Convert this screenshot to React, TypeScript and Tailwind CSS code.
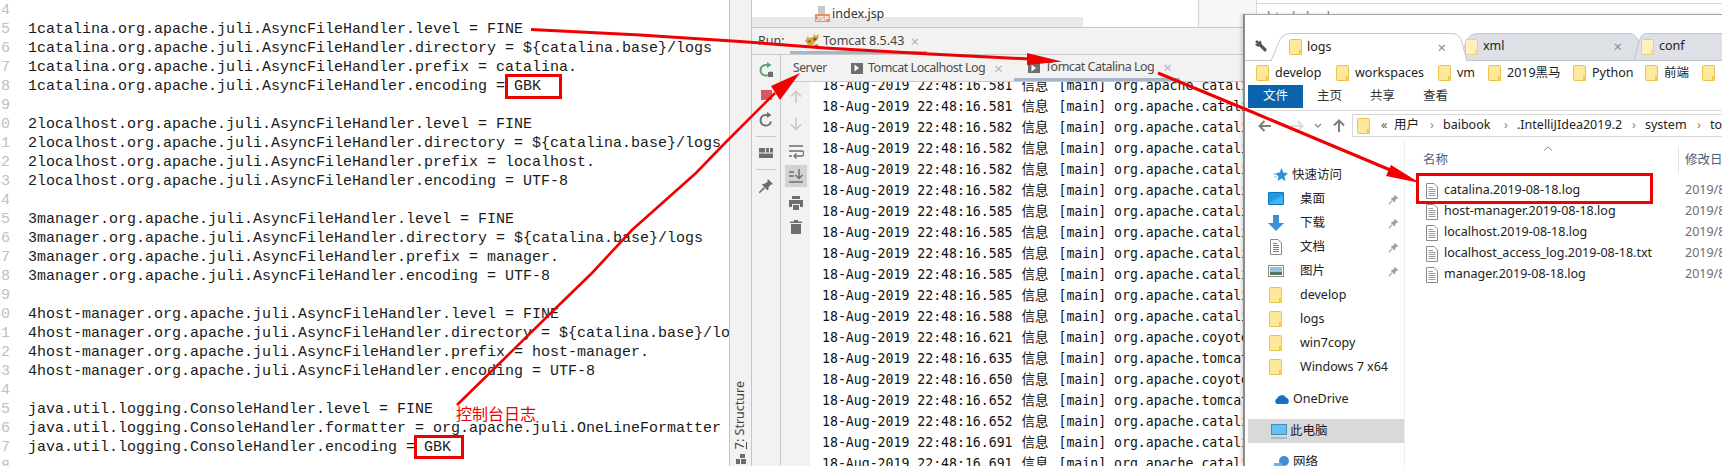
import React from "react";

const editorLines: (string | null)[] = [
  null,
  "1catalina.org.apache.juli.AsyncFileHandler.level = FINE",
  "1catalina.org.apache.juli.AsyncFileHandler.directory = ${catalina.base}/logs",
  "1catalina.org.apache.juli.AsyncFileHandler.prefix = catalina.",
  "1catalina.org.apache.juli.AsyncFileHandler.encoding = GBK",
  null,
  "2localhost.org.apache.juli.AsyncFileHandler.level = FINE",
  "2localhost.org.apache.juli.AsyncFileHandler.directory = ${catalina.base}/logs",
  "2localhost.org.apache.juli.AsyncFileHandler.prefix = localhost.",
  "2localhost.org.apache.juli.AsyncFileHandler.encoding = UTF-8",
  null,
  "3manager.org.apache.juli.AsyncFileHandler.level = FINE",
  "3manager.org.apache.juli.AsyncFileHandler.directory = ${catalina.base}/logs",
  "3manager.org.apache.juli.AsyncFileHandler.prefix = manager.",
  "3manager.org.apache.juli.AsyncFileHandler.encoding = UTF-8",
  null,
  "4host-manager.org.apache.juli.AsyncFileHandler.level = FINE",
  "4host-manager.org.apache.juli.AsyncFileHandler.directory = ${catalina.base}/logs",
  "4host-manager.org.apache.juli.AsyncFileHandler.prefix = host-manager.",
  "4host-manager.org.apache.juli.AsyncFileHandler.encoding = UTF-8",
  null,
  "java.util.logging.ConsoleHandler.level = FINE",
  "java.util.logging.ConsoleHandler.formatter = org.apache.juli.OneLineFormatter",
  "java.util.logging.ConsoleHandler.encoding = GBK",
  null,
];

const logRows: [string, string][] = [
  ["581", "catalina.startup"],
  ["581", "catalina.startup"],
  ["582", "catalina.startup"],
  ["582", "catalina.startup"],
  ["582", "catalina.startup"],
  ["582", "catalina.startup"],
  ["585", "catalina.startup"],
  ["585", "catalina.startup"],
  ["585", "catalina.startup"],
  ["585", "catalina.startup"],
  ["585", "catalina.startup"],
  ["588", "catalina.core"],
  ["621", "coyote.AbstractProtocol"],
  ["635", "tomcat.util.net"],
  ["650", "coyote.AbstractProtocol"],
  ["652", "tomcat.util.net"],
  ["652", "catalina.startup"],
  ["691", "catalina.core"],
  ["691", "catalina.core"],
];

const sansFont = "font-['Noto_Sans','Noto_Sans_CJK_SC',sans-serif]";

function FolderIcon({ pale = false, className = "" }: { pale?: boolean; className?: string }) {
  return (
    <svg width="13" height="16" viewBox="0 0 13 16" className={`shrink-0 ${className}`}>
      <rect x="0.5" y="0.5" width="12" height="15" rx="1" fill={pale ? "#fff0c2" : "#fde89c"} stroke={pale ? "#ecd078" : "#e6c44f"} />
      <rect x="10" y="11" width="3" height="5" fill={pale ? "#f5d878" : "#f3cb50"} />
    </svg>
  );
}

function FileIcon() {
  return (
    <svg width="12" height="16" viewBox="0 0 12 16" className="shrink-0">
      <path d="M0.5 0.5H8L11.5 4V15.5H0.5Z" fill="#fff" stroke="#8a8a8a" />
      <path d="M2.5 4.5H7M2.5 6.5H9.5M2.5 8.5H9.5M2.5 10.5H9.5M2.5 12.5H9.5" stroke="#9a9a9a" />
    </svg>
  );
}

function PinIcon({ color = "#6e6e6e", size = 16 }: { color?: string; size?: number }) {
  return (
    <svg width={size} height={size} viewBox="0 0 16 16" className="shrink-0">
      <path d="M10 1L15 6L13.6 6.8L12.8 6.4L10.4 9.6C10.8 10.8 10.4 11.6 9.6 12.4L3.8 6.6C4.6 5.8 5.6 5.4 6.6 5.8L9.8 3.4L9.4 2.4Z" fill={color} />
      <path d="M6.4 9.6L1.2 14.8" stroke={color} strokeWidth="1.6" />
    </svg>
  );
}

function ToolIcon({ children, className = "" }: { children: React.ReactNode; className?: string }) {
  return (
    <svg width="16" height="16" viewBox="0 0 16 16" className={`shrink-0 ${className}`}>
      {children}
    </svg>
  );
}

function RerunIcon({ color }: { color: string }) {
  return (
    <>
      <path d="M13 9.5A5.3 5.3 0 1 1 8 3H10" fill="none" stroke={color} strokeWidth="2" />
      <path d="M9 0L13.5 3L9 6Z" fill={color} />
    </>
  );
}

function ColumnSeparator() {
  return <div className="h-px w-[20px] bg-[#c9c9c9]" />;
}

function RunColumn() {
  return (
    <div className="flex w-[29px] shrink-0 flex-col items-center border-r border-[#c9c9c9] bg-[#f2f2f2] pt-[7px]">
      <ToolIcon>
        <RerunIcon color="#59a869" />
        <rect x="10" y="10" width="5" height="5" fill="#6e6e6e" />
      </ToolIcon>
      <div className="mt-[12px] h-[10px] w-[11px] bg-[#db5860]" />
      <ToolIcon className="mt-[12px]">
        <RerunIcon color="#6e6e6e" />
      </ToolIcon>
      <div className="mt-[8px]">
        <ColumnSeparator />
      </div>
      <ToolIcon className="mt-[8px]">
        <path d="M1 3H7V7.5H1ZM8 3H11V7.5H8ZM12 3H15V7.5H12ZM1 8.5H15V13H1Z" fill="#6e6e6e" />
      </ToolIcon>
      <div className="mt-[8px]">
        <ColumnSeparator />
      </div>
      <div className="mt-[8px]">
        <PinIcon />
      </div>
    </div>
  );
}

function LogColumn() {
  return (
    <div className="flex w-[29px] shrink-0 flex-col items-center bg-[#f2f2f2] pt-[7px]">
      <ToolIcon>
        <path d="M8 14V2.5M3 7.5L8 2.5L13 7.5" fill="none" stroke="#c9c9c9" strokeWidth="1.6" />
      </ToolIcon>
      <ToolIcon className="mt-[11px]">
        <path d="M8 2V13.5M3 8.5L8 13.5L13 8.5" fill="none" stroke="#c9c9c9" strokeWidth="1.6" />
      </ToolIcon>
      <ToolIcon className="mt-[11px]">
        <path d="M1 3H15M1 8H13.5A2.2 2.2 0 0 1 13.5 13H7M1 13H4" fill="none" stroke="#6e6e6e" strokeWidth="1.5" />
        <path d="M8.5 10.5L6 13L8.5 15.5" fill="none" stroke="#6e6e6e" strokeWidth="1.4" />
      </ToolIcon>
      <div className="mt-[6px] flex h-[22px] w-[22px] items-center justify-center bg-[#d2d2d2]">
        <ToolIcon>
          <path d="M1 4H6M1 8H6M1 14H15M11 1V10M7.5 7L11 10.5L14.5 7" fill="none" stroke="#6e6e6e" strokeWidth="1.5" />
        </ToolIcon>
      </div>
      <ToolIcon className="mt-[8px]">
        <path d="M4 1H12V4H4ZM1 5H15V12H12V9H4V12H1ZM5 10H11V15H5Z" fill="#6e6e6e" />
      </ToolIcon>
      <ToolIcon className="mt-[8px]">
        <path d="M6 1H10V2.5H14V4H2V2.5H6ZM3 5H13V15H3Z" fill="#6e6e6e" />
      </ToolIcon>
    </div>
  );
}

function LogTab({ label, active = false, width }: { label: string; active?: boolean; width: string }) {
  return (
    <div className={`flex h-full shrink-0 items-center pl-[14px] ${width} ${active ? "border-b-[3px] border-[#a8b4c8] pt-[2px]" : ""}`}>
      <span className="flex h-[11px] w-[12px] shrink-0 items-center justify-center bg-[#6e6e6e]">
        <svg width="6" height="8" viewBox="0 0 6 8">
          <path d="M0.5 0.5L5 4L0.5 7.5Z" fill="#fff" />
        </svg>
      </span>
      <span className="ml-[5px] text-[12.5px] tracking-[-0.5px] whitespace-nowrap text-[#4d4d4d]">{label}</span>
      <span className="ml-[9px] text-[15px] leading-none text-[#b5b5b5]">×</span>
    </div>
  );
}

function TomcatIcon() {
  return (
    <svg width="16" height="16" viewBox="0 0 16 16" className="shrink-0">
      <path d="M1 8L4 3L5 5L9 4L10 1L12 3L15 1L14 6L11 9L9 12L4 12Z" fill="#d8a93f" />
      <path d="M9 5L13 5L12 7L10 8ZM3 8L7 7L6 10Z" fill="#7b5a22" />
      <path d="M10 12L12 16L15 13L13 11Z" fill="#59a869" />
    </svg>
  );
}

function JspIcon() {
  return (
    <svg width="15" height="16" viewBox="0 0 15 16" className="shrink-0">
      <path d="M3 0H10V8H3Z" fill="#c4c8cc" />
      <rect x="0" y="8" width="15" height="8" fill="#ec8f5e" />
      <text x="7.5" y="14.6" textAnchor="middle" fontSize="7" fontWeight="700" fill="#fff" fontFamily="Liberation Sans, sans-serif">JSP</text>
    </svg>
  );
}

function NavIcon({ kind }: { kind: string }) {
  if (kind === "desktop") {
    return (
      <svg width="16" height="14" viewBox="0 0 16 14">
        <rect x="0.5" y="0.5" width="15" height="12" rx="0.5" fill="#1e9be8" stroke="#1073b8" />
        <path d="M1 11L15 3V12H1Z" fill="#47b4f2" />
      </svg>
    );
  }
  if (kind === "download") {
    return (
      <svg width="16" height="16" viewBox="0 0 16 16">
        <path d="M5 0H11V8H16L8 16L0 8H5Z" fill="#3f8fd8" />
      </svg>
    );
  }
  if (kind === "doc") {
    return (
      <svg width="12" height="16" viewBox="0 0 12 16">
        <path d="M0.5 0.5H8L11.5 4V15.5H0.5Z" fill="#fff" stroke="#8a8a8a" />
        <path d="M3 4.5H7M3 6.5H9M3 8.5H9M3 10.5H9M3 12.5H9" stroke="#2f93d8" />
      </svg>
    );
  }
  if (kind === "pictures") {
    return (
      <svg width="16" height="12" viewBox="0 0 16 12">
        <rect x="0.5" y="0.5" width="15" height="11" fill="#fff" stroke="#8a8a8a" />
        <rect x="2" y="2" width="12" height="5" fill="#8fc4de" />
        <rect x="2" y="7" width="12" height="3" fill="#55775a" />
      </svg>
    );
  }
  return <FolderIcon />;
}

const navItems = [
  { icon: "desktop", label: "桌面", pin: true },
  { icon: "download", label: "下载", pin: true },
  { icon: "doc", label: "文档", pin: true },
  { icon: "pictures", label: "图片", pin: true },
  { icon: "folder", label: "develop" },
  { icon: "folder", label: "logs" },
  { icon: "folder", label: "win7copy" },
  { icon: "folder", label: "Windows 7 x64" },
];

const bookmarks = [
  { label: "develop", width: "w-[80px]" },
  { label: "workspaces", width: "w-[102px]" },
  { label: "vm", width: "w-[50px]" },
  { label: "2019黑马", width: "w-[85px]" },
  { label: "Python", width: "w-[72px]" },
  { label: "前端", width: "w-[57px]" },
  { label: "", width: "w-[20px]" },
];

const crumbs = [
  { label: "用户", width: "w-[36px]" },
  { label: "baibook", width: "w-[61px]" },
  { label: ".IntelliJIdea2019.2", width: "w-[115px]" },
  { label: "system", width: "w-[52px]" },
  { label: "to", width: "" },
];

const files = [
  "catalina.2019-08-18.log",
  "host-manager.2019-08-18.log",
  "localhost.2019-08-18.log",
  "localhost_access_log.2019-08-18.txt",
  "manager.2019-08-18.log",
];

function ExplorerTab({ label, active = false, width }: { label: string; active?: boolean; width: string }) {
  return (
    <div className={`relative flex shrink-0 items-center ${width} ${active ? "z-10 -mb-px h-[28px] pl-[20px]" : "-ml-[10px] h-[27px] pl-[8px]"}`}>
      <svg className="absolute inset-0 h-full w-full" viewBox="0 0 100 27" preserveAspectRatio="none">
        <path d="M1 27L5 9C6 3 8 0.5 12 0.5H92C95 0.5 96 3 97 6L100 27" fill={active ? "#ffffff" : "#dde0e6"} stroke="#c3c7cc" vectorEffect="non-scaling-stroke" />
      </svg>
      <span className="relative flex w-full items-center pr-[21px]">
        <FolderIcon pale={!active} />
        <span className="ml-[5px] text-[12.5px] leading-none text-[#222]">{label}</span>
        <span className="ml-auto text-[15px] leading-none text-[#8c8c8c]">×</span>
      </span>
    </div>
  );
}

function Explorer() {
  return (
    <div className={`absolute top-[14px] left-[1243px] z-[15] flex h-[452px] w-[479px] flex-col overflow-hidden border-t border-l-2 border-t-[#a6a6a6] border-l-[#8c8c8c] bg-white shadow-[-2px_0_3px_rgba(0,0,0,0.15)] ${sansFont}`}>
      <div className="mt-[19px] flex h-[27px] shrink-0 items-end border-b border-[#c3c7cc]">
        <svg width="14" height="14" viewBox="0 0 14 14" className="mb-[7px] ml-[9px] shrink-0">
          <path d="M1 3L3 1L5 3L6 1.5C7 2 8 4 7.5 5L13 10.5L11 13L5.5 7.5C4 8 2 7 1 5.5L3 4.5Z" fill="#555" />
        </svg>
        <div className="ml-[1px] flex items-end">
          <ExplorerTab label="logs" active width="w-[198px]" />
          <ExplorerTab label="xml" width="w-[186px]" />
          <ExplorerTab label="conf" width="w-[120px]" />
        </div>
      </div>
      <div className="flex h-[24px] shrink-0 items-center pl-[11px] text-[12.5px] text-[#222]">
        {bookmarks.map((item) => (
          <div key={item.label} className={`flex shrink-0 items-center gap-[6px] ${item.width}`}>
            <FolderIcon />
            <span className="leading-none whitespace-nowrap">{item.label}</span>
          </div>
        ))}
      </div>
      <div className="flex h-[26px] shrink-0 items-start border-b border-[#dadada] text-[12.5px] text-[#333]">
        <div className="ml-[3px] flex h-[23px] w-[55px] items-center justify-center bg-[#0a63ad] text-white">文件</div>
        <div className="ml-[14px] flex h-[23px] w-[53px] items-center">主页</div>
        <div className="flex h-[23px] w-[53px] items-center">共享</div>
        <div className="flex h-[23px] items-center">查看</div>
      </div>
      <div className="flex h-[29px] shrink-0 items-center pl-[13px]">
        <svg width="14" height="12" viewBox="0 0 14 12" className="shrink-0">
          <path d="M13 6H2M6.5 1L1.5 6L6.5 11" fill="none" stroke="#7f7f7f" strokeWidth="2" />
        </svg>
        <svg width="14" height="12" viewBox="0 0 14 12" className="ml-[18px] shrink-0">
          <path d="M1 6H12M7.5 1L12.5 6L7.5 11" fill="none" stroke="#dcdcdc" strokeWidth="2" />
        </svg>
        <svg width="8" height="5" viewBox="0 0 8 5" className="ml-[10px] shrink-0">
          <path d="M1 1L4 4L7 1" fill="none" stroke="#8a8a8a" strokeWidth="1.4" />
        </svg>
        <svg width="12" height="14" viewBox="0 0 12 14" className="ml-[11px] shrink-0">
          <path d="M6 13V2M1 6.5L6 1.5L11 6.5" fill="none" stroke="#7f7f7f" strokeWidth="2" />
        </svg>
        <div className="ml-[7px] flex h-[23px] grow items-center border border-r-0 border-[#d9d9d9] pl-[4px] text-[12.5px] text-[#222]">
          <FolderIcon />
          <span className="ml-[11px] w-[13px] text-[#555]">«</span>
          {crumbs.map((crumb) => (
            <div key={crumb.label} className="flex shrink-0 items-center">
              <span className={`whitespace-nowrap ${crumb.width}`}>{crumb.label}</span>
              {crumb.width && <span className="w-[13px] text-[#888]">›</span>}
            </div>
          ))}
        </div>
      </div>
      <div className="flex min-h-0 grow">
        <div className="w-[160px] shrink-0 border-r border-[#ececec] pt-[23px] text-[12.5px] text-[#222]">
          <div className="flex h-[24px] items-center pl-[28px]">
            <svg width="15" height="14" viewBox="0 0 15 14" className="shrink-0">
              <path d="M8.5 0L10.4 4.6L15 5.2L11.5 8.4L12.5 13L8.5 10.6L4.5 13L5.5 8.4L2 5.2L6.6 4.6Z" fill="#2f93d8" />
              <path d="M0 6H4M1 9H4" stroke="#7cc0ee" />
            </svg>
            <span className="ml-[4px]">快速访问</span>
          </div>
          {navItems.map((item) => (
            <div key={item.label} className="flex h-[24px] items-center pr-[2px]">
              <div className="flex w-[55px] shrink-0 justify-center pl-[13px] pr-[7px]">
                <NavIcon kind={item.icon} />
              </div>
              <span className="whitespace-nowrap">{item.label}</span>
              {item.pin && (
                <span className="ml-auto mr-[3px]">
                  <PinIcon color="#98a0a8" size={11} />
                </span>
              )}
            </div>
          ))}
          <div className="mt-[8px] flex h-[24px] items-center pl-[29px]">
            <svg width="16" height="10" viewBox="0 0 16 10" className="shrink-0">
              <path d="M3 10A3 3 0 0 1 3 4.5A5 5 0 0 1 12 3.5A3.5 3.5 0 0 1 13 10Z" fill="#1a6fc0" />
            </svg>
            <span className="ml-[3px]">OneDrive</span>
          </div>
          <div className="mt-[8px] ml-[3px] flex h-[24px] items-center bg-[#d9d9d9] pl-[23px]">
            <svg width="16" height="15" viewBox="0 0 16 15" className="shrink-0">
              <rect x="0.5" y="0.5" width="15" height="10" fill="#5fc3f5" stroke="#4b8ab5" />
              <path d="M0 14H16" stroke="#6f9ac0" />
            </svg>
            <span className="ml-[3px]">此电脑</span>
          </div>
          <div className="mt-[7px] flex h-[24px] items-center pl-[29px]">
            <svg width="16" height="14" viewBox="0 0 16 14" className="shrink-0">
              <circle cx="10" cy="6" r="5" fill="#3f8fd8" />
              <rect x="0" y="8" width="8" height="6" fill="#6fb0e0" />
            </svg>
            <span className="ml-[3px]">网络</span>
          </div>
        </div>
        <div className="relative grow pt-[7px] pl-[18px] text-[12.5px]">
          <svg width="10" height="5" viewBox="0 0 10 5" className="absolute top-[6px] left-[138px]">
            <path d="M1 4.5L5 1L9 4.5" fill="none" stroke="#8a8a8a" />
          </svg>
          <div className="flex h-[26px] items-center">
            <span className="w-[255px] shrink-0 text-[#4c607a]">名称</span>
            <span className="h-full w-px shrink-0 bg-[#e4e4e4]" />
            <span className="ml-[6px] whitespace-nowrap text-[#4c607a]">修改日期</span>
          </div>
          <div className="mt-[7px]">
            {files.map((file) => (
              <div key={file} className="flex h-[21px] items-center">
                <div className="flex w-[262px] shrink-0 items-center gap-[6px]">
                  <span className="ml-[3px]">
                    <FileIcon />
                  </span>
                  <span className="whitespace-nowrap text-[#222]">{file}</span>
                </div>
                <span className="whitespace-nowrap text-[#6d6d6d]">2019/8/18</span>
              </div>
            ))}
          </div>
        </div>
      </div>
    </div>
  );
}

function Annotations() {
  return (
    <>
      <svg className="pointer-events-none absolute inset-0 z-20" width="1722" height="466" viewBox="0 0 1722 466">
        <polyline points="531,29.5 640,35 740,41.5 825,48 930,54 1030,59" fill="none" stroke="#f00000" strokeWidth="3" />
        <polygon points="1062,61.5 1027,53 1027,65" fill="#f00000" />
        <polyline points="457,405 557,307 592,273 632,230 696,173 725,143 775,93" fill="none" stroke="#f00000" strokeWidth="2.6" />
        <polygon points="800,73 771,86 780,100" fill="#f00000" />
        <polyline points="1158,73 1245,109 1395,172" fill="none" stroke="#f00000" strokeWidth="3" />
        <polygon points="1420,183 1391,165 1386,176" fill="#f00000" />
      </svg>
      <div className="absolute top-[74px] left-[505px] z-20 h-[25px] w-[57px] border-[3px] border-[#f00000]" />
      <div className="absolute top-[435px] left-[414px] z-20 h-[24px] w-[50px] border-[3px] border-[#f00000]" />
      <div className="absolute top-[173px] left-[1416px] z-20 h-[31px] w-[237px] border-[3px] border-[#f00000]" />
      <div className="absolute top-[402px] left-[456px] z-20 font-['Noto_Sans_CJK_SC',sans-serif] text-[16px] leading-[22px] text-[#f00000]">控制台日志</div>
    </>
  );
}

export default function App() {
  return (
    <div className="relative flex h-[466px] w-[1722px] overflow-hidden bg-white">
      <div className="w-[729px] shrink-0 overflow-hidden pt-[0.5px] font-['Liberation_Mono',monospace] text-[15px] leading-[19px] text-[#1a1a1a]">
        {editorLines.map((line, index) => (
          <div key={index} className="flex h-[19px]">
            <span className="flex w-[10px] shrink-0 justify-end overflow-hidden text-[#c0c0c0]">
              <span>{24 + index}</span>
            </span>
            <span className="ml-[18px] whitespace-pre">{line}</span>
          </div>
        ))}
      </div>

      <div className={`flex min-w-0 grow ${sansFont}`}>
        <div className="flex w-[23px] shrink-0 flex-col items-center justify-end border-x border-[#c4c4c4] bg-[#f2f2f2] pb-[2px]">
          <span className="rotate-180 text-[12.5px] whitespace-nowrap text-[#444] [writing-mode:vertical-rl]">
            <span className="underline">7</span>: Structure
          </span>
          <svg width="10" height="10" viewBox="0 0 10 10" className="mt-[5px]">
            <path d="M4 0H9V4H4ZM0 5H4V10H0ZM5 5H10V10H5Z" fill="#6e6e6e" />
          </svg>
        </div>

        <div className="flex min-w-0 grow flex-col">
          <div className="flex h-[27px] shrink-0">
            <div className="relative w-[447px] shrink-0 border-r border-[#d0d0d0] bg-white">
              <div className="absolute bottom-0 left-0 h-[10px] w-[331px] bg-[#e9e9e9]" />
              <div className="relative ml-[63px] flex h-[27px] items-start pt-[6px]">
                <JspIcon />
                <span className="ml-[2px] text-[12.5px] leading-[15px] text-[#333]">index.jsp</span>
              </div>
            </div>
            <div className="w-[58px] shrink-0 border-r border-[#d8d8d8] bg-[#f7f7f7]" />
            <div className="mt-[3px] grow border-t border-[#d8d8d8] bg-white pt-[4px] pl-[10px] text-[13px] leading-[16px] text-[#777]">html › body</div>
          </div>

          <div className="flex h-[28px] shrink-0 items-center border-y border-[#c9c9c9] bg-[#f2f2f2] pl-[6px] text-[12.5px] text-[#444]">
            <span className="w-[46px]">Run:</span>
            <div className="relative flex h-full items-center">
              <TomcatIcon />
              <span className="ml-[3px] text-[#444]">Tomcat 8.5.43</span>
              <span className="ml-[6px] text-[15px] leading-none text-[#b5b5b5]">×</span>
              <div className="absolute right-[-8px] bottom-0 left-[-14px] h-[3px] bg-[#a8b4c8]" />
            </div>
          </div>

          <div className="flex min-h-0 grow">
            <RunColumn />
            <div className="flex min-w-0 grow flex-col">
              <div className="flex h-[27px] shrink-0 items-center border-b border-[#c9c9c9] bg-[#f2f2f2]">
                <span className="w-[56px] shrink-0 pl-[12px] text-[12px] tracking-[-0.4px] text-[#4d4d4d]">Server</span>
                <LogTab label="Tomcat Localhost Log" width="w-[177px]" />
                <LogTab label="Tomcat Catalina Log" width="w-[166px]" active />
              </div>
              <div className="flex min-h-0 grow">
                <LogColumn />
                <div className="min-w-0 grow overflow-hidden pl-[12px]">
                  <div className="-mt-[7px] font-['DejaVu_Sans_Mono','Noto_Sans_CJK_SC',monospace] text-[13.2px] leading-[21px] text-[#111]">
                    {logRows.map(([ms, pkg], index) => (
                      <div key={index} className="h-[21px] whitespace-pre">
                        18-Aug-2019 22:48:16.{ms} <span className="mr-[2px] ml-[1px] text-[13.5px]">信息</span> [main] org.apache.{pkg}
                      </div>
                    ))}
                  </div>
                </div>
              </div>
            </div>
          </div>
        </div>
      </div>

      <Explorer />
      <Annotations />
    </div>
  );
}
